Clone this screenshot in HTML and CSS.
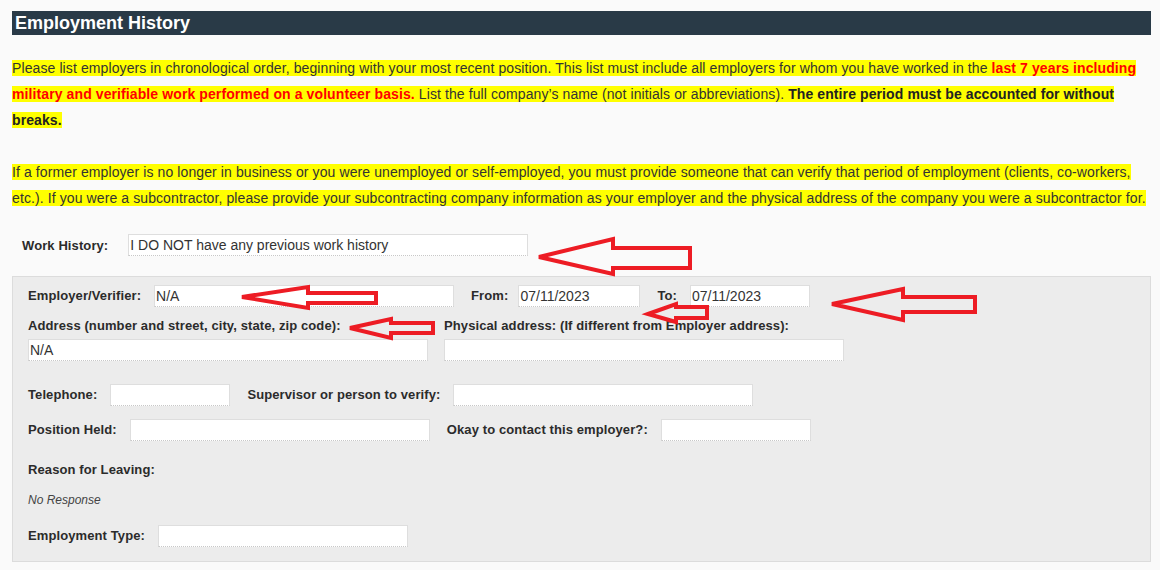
FILE: index.html
```html
<!DOCTYPE html>
<html lang="en">
<head>
    <meta charset="UTF-8">
    <meta name="viewport" content="width=device-width, initial-scale=1.0">
    <title>Employment History</title>
    <link rel="stylesheet" href="styles.css">
</head>
<body>
    <div class="page">
        <h2 class="section-title">Employment History</h2>

        <p class="notice">
            <span class="hl">Please list employers in chronological order, beginning with your most recent position. This list must include all employers for whom you have worked in the <b class="red">last 7 years including military and verifiable work performed on a volunteer basis.</b> List the full company’s name (not initials or abbreviations). <b>The entire period must be accounted for without breaks.</b></span>
        </p>

        <p class="notice notice-gap">
            <span class="hl">If a former employer is no longer in business or you were unemployed or self-employed, you must provide someone that can verify that period of employment (clients, co-workers, etc.). If you were a subcontractor, please provide your subcontracting company information as your employer and the physical address of the company you were a subcontractor for.</span>
        </p>

        <div class="history-row">
            <label class="history-label">Work History:</label>
            <input class="field w400" type="text" value="I DO NOT have any previous work history">
        </div>

        <div class="employer-box">
            <div class="row">
                <label>Employer/Verifier:</label>
                <input class="field w300" type="text" value="N/A">
                <label class="next">From:</label>
                <input class="field w122" type="text" value="07/11/2023">
                <label class="next">To:</label>
                <input class="field w120" type="text" value="07/11/2023">
            </div>

            <div class="address-grid">
                <div class="col">
                    <label>Address (number and street, city, state, zip code):</label>
                    <input class="field" type="text" value="N/A">
                </div>
                <div class="col">
                    <label>Physical address: (If different from Employer address):</label>
                    <input class="field" type="text" value="">
                </div>
            </div>

            <div class="row row-phone">
                <label>Telephone:</label>
                <input class="field w120" type="text" value="">
                <label class="next">Supervisor or person to verify:</label>
                <input class="field w300" type="text" value="">
            </div>

            <div class="row row-position">
                <label>Position Held:</label>
                <input class="field w300" type="text" value="">
                <label class="next">Okay to contact this employer?:</label>
                <input class="field w150" type="text" value="">
            </div>

            <div class="reason">
                <label>Reason for Leaving:</label>
                <div class="no-response">No Response</div>
            </div>

            <div class="row row-type">
                <label>Employment Type:</label>
                <input class="field w250" type="text" value="">
            </div>
        </div>
    </div>

    <!-- red annotation arrows drawn over the form -->
    <svg class="arrows" width="1160" height="570" viewBox="0 0 1160 570">
        <path d="M539,257 L613,239 L613,248 L690,248 L690,268 L613,268 L613,274 Z"/>
        <path d="M242,297 L308,287 L308,293 L376,293 L376,303 L308,303 L308,308 Z"/>
        <path d="M832,304 L903,289 L903,297 L975,297 L975,312 L903,312 L903,320 Z"/>
        <path d="M648,314 L676,304 L676,307 L707,307 L707,318 L676,318 L676,322 Z"/>
        <path d="M350,328 L391,319 L391,323 L433,323 L433,333 L391,333 L391,338 Z"/>
    </svg>
</body>
</html>
```

FILE: styles.css
```css
* {
    box-sizing: border-box;
}

body {
    margin: 0;
    padding: 0;
    background: #fafafa;
    font-family: "Liberation Sans", Arial, sans-serif;
    color: #333;
    position: relative;
    width: 1160px;
    height: 570px;
    overflow: hidden;
}

.page {
    padding: 11px 9px 0 12px;
}

.section-title {
    margin: 0;
    height: 24px;
    line-height: 24px;
    padding-left: 3px;
    background: #293a47;
    color: #fff;
    font-size: 18px;
    font-weight: bold;
}

.notice {
    margin: 20px 0 0;
    font-size: 14px;
    line-height: 26px;
    letter-spacing: 0.1px;
}

.notice-gap {
    margin-top: 26px;
}

.hl {
    background: #ffff00;
}

.notice b {
    color: #222;
}

.notice b.red {
    color: #ff0000;
}

label {
    font-size: 13px;
    font-weight: bold;
    color: #2b2b2b;
    letter-spacing: 0.1px;
    white-space: nowrap;
}

.field {
    height: 22px;
    padding: 0 1px;
    border: 1px solid #dedede;
    border-bottom: 1px dotted #c8c8c8;
    background: #fff;
    font-family: "Liberation Sans", Arial, sans-serif;
    font-size: 14px;
    color: #333;
    outline: none;
}

.w120 { width: 120px; }
.w122 { width: 122px; }
.w150 { width: 150px; }
.w250 { width: 250px; }
.w300 { width: 300px; }
.w400 { width: 400px; }

.history-row {
    display: flex;
    align-items: center;
    margin-top: 23px;
    padding-left: 10px;
}

.history-label {
    margin-right: 20px;
}

.employer-box {
    margin-top: 20px;
    background: #ececec;
    border: 1px solid #dcdcdc;
    padding: 8px 15px 14px;
}

.row {
    display: flex;
    align-items: center;
}

.row label {
    margin-right: 13px;
    padding-bottom: 2px;
}

.row label.next {
    margin-left: 17px;
}

.row label.next + .w122 {
    margin-left: -3px;
}

.address-grid {
    display: grid;
    grid-template-columns: 400px 400px;
    column-gap: 16px;
    margin-top: 11px;
}

.address-grid label {
    display: block;
    line-height: 16px;
    margin-bottom: 5px;
}

.address-grid .field {
    width: 100%;
}

.row-phone {
    margin-top: 23px;
}

.row-position {
    margin-top: 13px;
}

.reason {
    margin-top: 21px;
}

.reason label {
    display: block;
    line-height: 16px;
}

.no-response {
    margin-top: 14px;
    font-size: 12px;
    font-style: italic;
    line-height: 16px;
    color: #444;
}

.row-type {
    margin-top: 17px;
}

.arrows {
    position: absolute;
    left: 0;
    top: 0;
    pointer-events: none;
}

.arrows path {
    fill: none;
    stroke: #ed1c24;
    stroke-width: 4;
    stroke-linejoin: miter;
}
```
